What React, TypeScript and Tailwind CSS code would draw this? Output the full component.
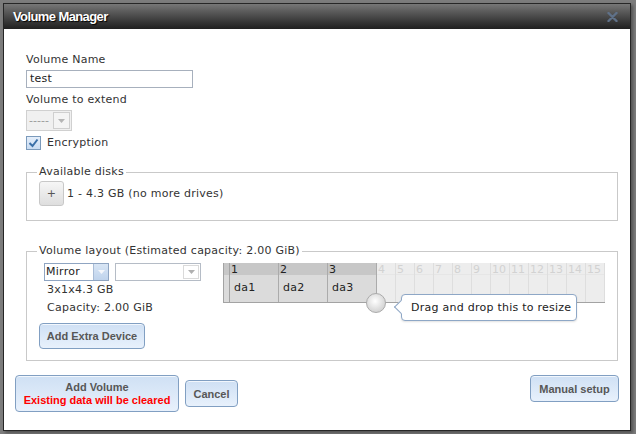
import React from "react";

const btn =
  "rounded-[4px] border border-[#819fc2] bg-linear-to-b from-[#cfe0f4] to-[#e8f1fc] shadow-[inset_0_1px_0_#f2f7fd] font-['Liberation_Sans',Arial,sans-serif] font-bold text-[11px] tracking-normal text-[#575757]";

function Arrow({ color }: { color: string }) {
  return (
    <svg width="7" height="4" viewBox="0 0 7 4">
      <path d="M0 0 L7 0 L3.5 4 Z" fill={color} />
    </svg>
  );
}

export default function App() {
  const faded = [4, 5, 6, 7, 8, 9, 10, 11, 12, 13, 14, 15];
  return (
    <div className="w-[636px] h-[434px] overflow-hidden bg-[#7c7c7c] pt-[3px] pl-[3px] font-['DejaVu_Sans',Verdana,sans-serif] text-[11px] tracking-[0.25px] leading-[14px] text-[#333]">
      <div className="w-[628px] h-[428px] border border-[#262626] bg-white flex flex-col shadow-[2px_2px_3px_rgba(0,0,0,0.35)]">
        {/* title bar */}
        <div className="h-[25px] shrink-0 bg-linear-to-b from-[#777777] to-[#202020] flex items-center justify-between pl-[9px] pr-[12px]">
          <span className="font-['Liberation_Sans',Arial,sans-serif] font-bold text-[13px] tracking-[-0.6px] leading-[25px] text-white [text-shadow:1px_1px_1px_#000]">
            Volume Manager
          </span>
          <svg width="11" height="10" viewBox="0 0 11 10">
            <path d="M1.5 1 L9.5 9 M9.5 1 L1.5 9" stroke="#5f7189" strokeWidth="2.4" strokeLinecap="round" />
          </svg>
        </div>

        {/* content */}
        <div className="pl-[22px] pr-[12px] pt-[24px]">
          <div>Volume Name</div>
          <div className="mt-[3px] w-[167px] h-[18px] border border-[#a7b0bd] pl-[3px] leading-[16px] text-[#222]">
            test
          </div>
          <div className="mt-[5px]">Volume to extend</div>
          <div className="mt-[3px] flex w-[46px] h-[21px] border border-[#d0d0d0] bg-[#f0f0f0]">
            <div className="w-[26px] pl-[2px] leading-[19px] text-[#9a9a9a] tracking-normal">-----</div>
            <div className="flex-1 my-[1px] mr-[1px] border border-[#cfcfcf] bg-[#f4f4f4] flex items-center justify-center">
              <Arrow color="#b5b5b5" />
            </div>
          </div>
          <div className="mt-[5px] flex items-center h-[14px]">
            <div className="w-[15px] h-[14px] border border-[#7b9abb] bg-linear-to-b from-[#e4eefa] to-[#c9dcf2] flex items-center justify-center">
              <svg width="11" height="10" viewBox="0 0 11 10">
                <path d="M1.5 5 L4.5 8 L9.5 1.5" stroke="#3a6fa8" strokeWidth="2" fill="none" />
              </svg>
            </div>
            <span className="ml-[6px]">Encryption</span>
          </div>

          {/* available disks */}
          <fieldset className="mt-[15px] border border-[#c9c9c9] pl-[10px] pb-[14px] pt-[2px]">
            <legend className="px-[2px] leading-[14px]">Available disks</legend>
            <div className="flex items-center">
              <div className="ml-[2px] w-[25px] h-[25px] rounded-[3px] border border-[#c8c8c8] bg-linear-to-b from-[#f6f6f6] to-[#dedede] flex items-center justify-center text-[#555] text-[11px]">
                +
              </div>
              <span className="ml-[3px]">1 - 4.3 GB (no more drives)</span>
            </div>
          </fieldset>

          {/* volume layout */}
          <fieldset className="mt-[23px] border border-[#c9c9c9] pl-[10px] pb-[11px] pt-[5px]">
            <legend className="px-[2px] leading-[14px]">Volume layout (Estimated capacity: 2.00 GiB)</legend>
            <div className="flex">
              <div className="w-[186px] shrink-0">
                <div className="ml-[7px] flex items-start">
                  <div className="flex w-[65px] h-[18px] border border-[#8fa5c2]">
                    <div className="w-[48px] pl-[1px] leading-[16px] text-[#222]">Mirror</div>
                    <div className="flex-1 border-l border-[#a9bcd6] bg-linear-to-b from-[#d9e6f5] to-[#bfd3ec] flex items-center justify-center">
                      <Arrow color="#f4f7fb" />
                    </div>
                  </div>
                  <div className="ml-[6px] flex w-[86px] h-[18px] border border-[#b5bcc6] bg-white">
                    <div className="flex-1" />
                    <div className="w-[16px] m-[1px] border border-[#dadada] flex items-center justify-center">
                      <Arrow color="#b0b0b0" />
                    </div>
                  </div>
                </div>
                <div className="ml-[10px] mt-[2px]">3x1x4.3 GB</div>
                <div className="ml-[10px] mt-[4px]">Capacity: 2.00 GiB</div>
                <div className={`${btn} ml-[2px] mt-[8px] w-[106px] h-[26px] flex items-center justify-center`}>
                  Add Extra Device
                </div>
              </div>

              {/* grid */}
              <div className="relative h-[40px] self-start flex border-l border-b border-[#a3a3a3] tracking-normal">
                <div className="w-[6px] flex flex-col border-r border-[#a3a3a3]">
                  <div className="h-[12px] bg-[#c7c7c7]" />
                  <div className="flex-1 bg-[#dbdbdb]" />
                </div>
                {[1, 2, 3].map((n) => (
                  <div key={n} className="w-[49px] flex flex-col border-r border-[#ababab]">
                    <div className="h-[12px] bg-[#c7c7c7] pl-[1px] leading-[13px] text-[#222]">{n}</div>
                    <div className="flex-1 bg-[#dbdbdb] pl-[4px] pt-[6px] text-[#222] tracking-[0.25px]">da{n}</div>
                  </div>
                ))}
                {faded.map((n) => (
                  <div key={n} className="w-[19px] flex flex-col border-r border-[#dedede] bg-[#ededed]">
                    <div className="h-[12px] border-b border-[#e6e6e6] pl-[1px] leading-[13px] text-[#d2d2d2]">{n}</div>
                    <div className="flex-1" />
                  </div>
                ))}
                {/* handle */}
                <div className="absolute left-[142px] top-[30px] w-[20px] h-[20px] rounded-full border border-[#ababab] bg-[radial-gradient(circle_at_45%_40%,#ffffff_0%,#e4e4e4_45%,#c4c4c4_100%)]" />
                {/* tooltip */}
                <div className="absolute left-[177px] top-[31px] w-[176px] h-[27px] rounded-[4px] border border-[#8ea7c6] bg-white pl-[9px] leading-[25px] text-[#222] whitespace-nowrap tracking-[0.25px] shadow-[0_1px_2px_rgba(0,0,0,0.12)]">
                  <div className="absolute left-[-6px] top-[7px] w-[10px] h-[10px] rotate-45 border-l border-b border-[#8ea7c6] bg-white" />
                  <span className="relative">Drag and drop this to resize</span>
                </div>
              </div>
            </div>
          </fieldset>
        </div>

        {/* footer buttons */}
        <div className="mt-[14px] px-[11px] flex items-start justify-between">
          <div className="flex items-center">
            <div className={`${btn} w-[164px] h-[37px] flex flex-col items-center justify-center leading-[12px]`}>
              <span>Add Volume</span>
              <span className="text-[#ff0000] mt-[1px]">Existing data will be cleared</span>
            </div>
            <div className={`${btn} ml-[6px] w-[53px] h-[27px] flex items-center justify-center`}>Cancel</div>
          </div>
          <div className={`${btn} w-[89px] h-[27px] flex items-center justify-center`}>Manual setup</div>
        </div>
      </div>
    </div>
  );
}
